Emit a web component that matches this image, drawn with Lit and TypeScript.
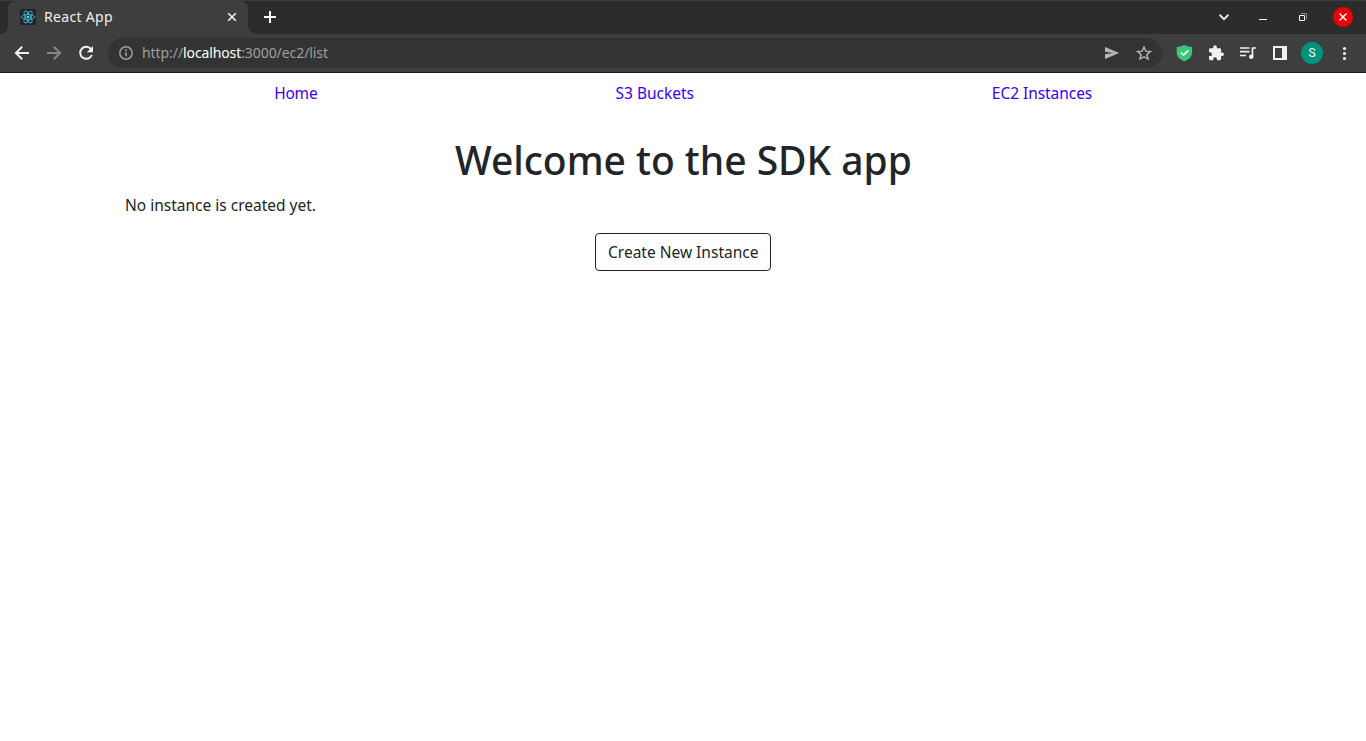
import { LitElement, html, css, svg } from "lit";
import { customElement } from "lit/decorators.js";

@customElement("browser-chrome")
class BrowserChrome extends LitElement {
  static styles = css`
    :host { display: block; font-family: "Noto Sans", sans-serif; color: #f1f1f1; }
    svg { display: block; flex: none; }
    .strip { box-sizing: border-box; height: 34px; background: #2c2c2c; border-top: 1px solid #3d3d3d; display: flex; align-items: center; padding-left: 8px; position: relative; }
    .before { position: absolute; left: 0; top: 0; width: 8px; height: 33px; background: #3e3e3e; }
    .before::after { content: ""; position: absolute; inset: 0; background: #2c2c2c; border-bottom-right-radius: 8px; }
    .tab { height: 33px; width: 240px; background: #3e3e3e; border-radius: 8px 8px 0 0; display: flex; align-items: center; padding: 0 8px 1px 12px; box-sizing: border-box; position: relative; }
    .tab::after { content: ""; position: absolute; left: 240px; bottom: 0; width: 8px; height: 8px; background: radial-gradient(circle at 100% 0, #2c2c2c 7.5px, #3e3e3e 8px); }
    .title { flex: 1; margin-left: 8px; font-size: 14px; letter-spacing: .32px; line-height: 20px; white-space: nowrap; }
    .plus { margin-left: 14px; padding-bottom: 2px; }
    .window { margin-left: auto; display: flex; align-items: center; gap: 20px; padding: 0 13px 2px 0; }
    .bar { box-sizing: border-box; height: 39px; background: #3e3e3e; border-bottom: 1px solid #211e20; display: flex; align-items: center; padding: 0 12px; }
    .nav { display: flex; gap: 12px; }
    .omni { box-sizing: border-box; width: 1054px; height: 30px; border-radius: 15px; margin-left: 12px; background: #333; display: flex; align-items: center; padding: 0 8px; }
    .url { flex: 1; margin-left: 6px; font-size: 14px; letter-spacing: -.07px; line-height: 20px; color: #9e9e9e; white-space: nowrap; }
    .host { color: #fff; letter-spacing: -.12px; }
    .actions { display: flex; gap: 12px; }
    .ext { display: flex; gap: 12px; margin-left: 12px; align-items: center; }
    .avatar { width: 22px; height: 22px; margin: 0 -1px; border-radius: 50%; background: #00937c; display: flex; align-items: center; justify-content: center; font: 12px Roboto, sans-serif; color: #fff; }
  `;

  icon(body: unknown, color = "#f1f1f1", size = 20) {
    return html`<svg width=${size} height=${size} viewBox="0 0 ${size} ${size}" fill="none" stroke=${color} stroke-width="2">${body}</svg>`;
  }

  render() {
    return html`
      <div class="strip">
        <div class="before"></div>
        <div class="tab">
          ${this.icon(svg`<rect width="16" height="16" rx="1.5" fill="#20232a" stroke="none"/>
            <g stroke="#35b4cc" stroke-width=".9"><ellipse cx="8" cy="8" rx="6.6" ry="2.6"/><ellipse cx="8" cy="8" rx="6.6" ry="2.6" transform="rotate(60 8 8)"/><ellipse cx="8" cy="8" rx="6.6" ry="2.6" transform="rotate(120 8 8)"/></g><circle cx="8" cy="8" r="1.3" fill="#61dafb" stroke="none"/>`, "none", 16)}
          <span class="title">React App</span>
          ${this.icon(svg`<path d="M4.2 4.2l7.6 7.6M11.8 4.2l-7.6 7.6" stroke-width="1.6"/>`, "#f1f1f1", 16)}
        </div>
        <div class="plus">${this.icon(svg`<path d="M8 2v12M2 8h12"/>`, "#f8f8f8", 16)}</div>
        <div class="window">
          ${this.icon(svg`<path d="M6.5 7.8l4.5 4.4 4.5-4.4"/>`, "#e8e8e8")}
          ${this.icon(svg`<path d="M6 12.5h8" stroke-width="1"/>`, "#fff")}
          ${this.icon(svg`<path d="M8 6.5h5.5v6" stroke="#8e8e8e" stroke-width="1"/><path d="M6.5 8.5h5v5h-5z" stroke-width="1"/>`, "#fff")}
          ${this.icon(svg`<circle cx="10" cy="10" r="10" fill="#ed0000" stroke="none"/><path d="M6.5 6.5l7 7M13.5 6.5l-7 7" stroke-width="1.5"/>`, "#fff")}
        </div>
      </div>
      <div class="bar">
        <div class="nav">
          ${this.icon(svg`<path d="M17 10H4.3M10.2 3.7L3.9 10l6.3 6.3"/>`)}
          ${this.icon(svg`<path d="M3 10h12.7M9.8 3.7l6.3 6.3-6.3 6.3"/>`, "#858585")}
          ${this.icon(svg`<path d="M15 6.2A6 6 0 1 0 15.8 12"/><path d="M17 3v6.2h-6.2z" fill="#f1f1f1" stroke="none"/>`)}
        </div>
        <div class="omni">
          ${this.icon(svg`<circle cx="10" cy="10" r="6.2" stroke-width="1.5"/><path d="M10 9.3v4M10 6.3v1.6" stroke-width="1.6"/>`, "#9e9e9e")}
          <span class="url">http://<span class="host">localhost</span>:3000/ec2/list</span>
          <div class="actions">
            ${this.icon(svg`<path d="M3 4l14.2 6L3 16v-4.7l8-1.3-8-1.3z" fill="#b5b5b5" stroke="none"/>`)}
            ${this.icon(svg`<path d="M10 4l1.8 4.2 4.6.4-3.5 3 1.1 4.5-4-2.4-4 2.4 1.1-4.5-3.5-3 4.6-.4z" stroke-width="1.4"/>`, "#b8b8b8")}
          </div>
        </div>
        <div class="ext">
          ${this.icon(svg`<path d="M10.400 2c2.600 1.400 5 1.800 7.700 1.900v5.300c0 4.500-3.300 7.500-7.700 9-4.400-1.500-7.700-4.500-7.700-9V3.900C5.400 3.800 7.800 3.400 10.400 2z" fill="#38c774" stroke="none"/><path d="M6.800 9.500l2.700 2.600 4.800-4.700" stroke-width="1.700"/>`, "#fff")}
          ${this.icon(svg`<path transform="translate(1.600 1.600) scale(.71)" d="M20.500 11H19V7c0-1.100-.9-2-2-2h-4V3.500a2.500 2.500 0 0 0-5 0V5H4c-1.100 0-2 .9-2 2v3.800h1.500a2.700 2.700 0 0 1 0 5.400H2V20c0 1.100.9 2 2 2h3.800v-1.500a2.700 2.700 0 0 1 5.400 0V22H17c1.100 0 2-.9 2-2v-4h1.500a2.500 2.500 0 0 0 0-5z" fill="#f1f1f1" stroke="none"/>`)}
          ${this.icon(svg`<path d="M2 5h9.500M2 8.700h9.500M2 12.500h6M14.500 14V5H18" stroke-width="1.700"/><circle cx="13.200" cy="13.700" r="2.200" fill="#f1f1f1" stroke="none"/>`)}
          ${this.icon(svg`<path d="M3 3h14v14H3zM5 5v10h7V5z" fill="#f1f1f1" fill-rule="evenodd" stroke="none"/>`)}
          <div class="avatar">S</div>
          ${this.icon(svg`<g fill="#f1f1f1" stroke="none"><circle cx="10.500" cy="5.500" r="1.600"/><circle cx="10.500" cy="10.500" r="1.600"/><circle cx="10.500" cy="15.500" r="1.600"/></g>`)}
        </div>
      </div>`;
  }
}

@customElement("app-root")
class AppRoot extends LitElement {
  static styles = css`
    :host { display: block; height: 741px; overflow: hidden; background: #fff; color: #212529; font: 15.5px/24px "Noto Sans", sans-serif; }
    .page { width: 1116px; margin: 0 auto; display: flex; flex-direction: column; padding-top: 8px; }
    nav { display: flex; justify-content: space-around; color: #3a00f5; white-space: nowrap; }
    .home { width: 43px; letter-spacing: -.2px; }
    .s3 { width: 78px; }
    .ec2 { width: 100px; letter-spacing: -.05px; }
    h1 { margin: 31px auto 9px; width: 456px; font-size: 39px; line-height: 48px; font-weight: 500; letter-spacing: -.03px; white-space: nowrap; }
    .empty { height: 24px; white-space: nowrap; }
    button { box-sizing: border-box; width: 176px; height: 38px; margin: 16px auto 0; padding: 0 12px; border: 1px solid #212529; border-radius: 4px; background: #fff; color: #212529; font: inherit; white-space: nowrap; text-align: left; }
  `;

  render() {
    return html`
      <browser-chrome></browser-chrome>
      <main class="page">
        <nav><a class="home">Home</a><a class="s3">S3 Buckets</a><a class="ec2">EC2 Instances</a></nav>
        <h1>Welcome to the SDK app</h1>
        <div class="empty">No instance is created yet.</div>
        <button>Create New Instance</button>
      </main>`;
  }
}
